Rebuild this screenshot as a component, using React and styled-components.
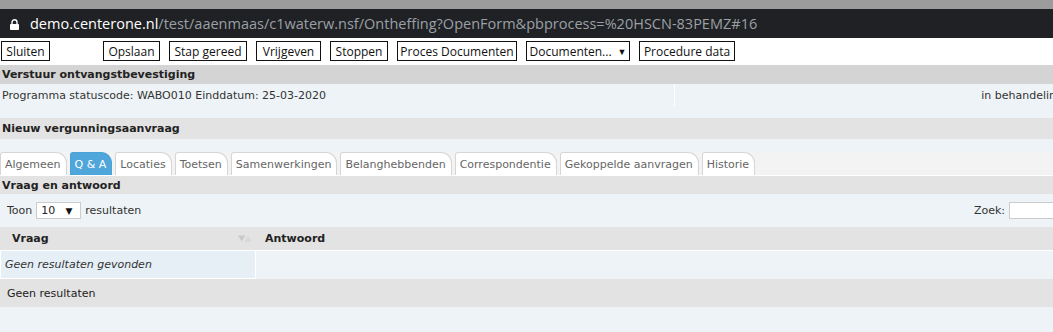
import styled, { createGlobalStyle } from "styled-components";

const GlobalStyle = createGlobalStyle`
  html, body {
    margin: 0;
    padding: 0;
    background: #fff;
    overflow: hidden;
  }
  body {
    font-family: "DejaVu Sans", Verdana, sans-serif;
    font-size: 11px;
    color: #222;
  }
`;

const buttons = [
  { label: "Opslaan", width: 57 },
  { label: "Stap gereed", width: 78 },
  { label: "Vrijgeven", width: 65 },
  { label: "Stoppen", width: 58 },
  { label: "Proces Documenten", width: 120 },
];

const tabs = [
  "Algemeen",
  "Q & A",
  "Locaties",
  "Toetsen",
  "Samenwerkingen",
  "Belanghebbenden",
  "Correspondentie",
  "Gekoppelde aanvragen",
  "Historie",
];

const App = () => {
  return (
    <>
      <GlobalStyle />
      <Page>
        <TitleStrip />
        <AddressBar>
          <LockIcon width="9" height="11" viewBox="0 0 9 11">
            <path
              d="M2 5V3.3a2.5 2.5 0 0 1 5 0V5"
              fill="none"
              stroke="#fff"
              strokeWidth="1.4"
            />
            <rect x="0" y="5" width="9" height="6" rx="0.8" fill="#fff" />
          </LockIcon>
          <Url>
            <Domain>demo.centerone.nl</Domain>
            /test/aaenmaas/c1waterw.nsf/Ontheffing?OpenForm&amp;pbprocess=%20HSCN-83PEMZ#16
          </Url>
        </AddressBar>

        <Toolbar>
          <ToolButton $width={49}>Sluiten</ToolButton>
          <ButtonGroup>
            {buttons.map((b) => (
              <ToolButton key={b.label} $width={b.width}>
                {b.label}
              </ToolButton>
            ))}
            <ToolButton $width={104}>
              Documenten... <Caret>▼</Caret>
            </ToolButton>
            <ToolButton $width={96}>Procedure data</ToolButton>
          </ButtonGroup>
        </Toolbar>

        <SectionHeader $tone="dark">Verstuur ontvangstbevestiging</SectionHeader>
        <StatusRow>
          <StatusCell>Programma statuscode: WABO010 Einddatum: 25-03-2020</StatusCell>
          <StatusCell $right>in behandeling</StatusCell>
        </StatusRow>

        <SectionHeader $tone="light" $gap>
          Nieuw vergunningsaanvraag
        </SectionHeader>

        <TabBar>
          {tabs.map((t) => (
            <Tab key={t} $active={t === "Q & A"}>
              {t}
            </Tab>
          ))}
        </TabBar>

        <PanelTitle>Vraag en antwoord</PanelTitle>
        <Controls>
          <Length>
            Toon
            <Select>
              10 <Caret>▼</Caret>
            </Select>
            resultaten
          </Length>
          <Search>
            Zoek:
            <SearchInput />
          </Search>
        </Controls>

        <Table>
          <HeadRow>
            <HeadCell $first>
              Vraag
              <SortIcon width="14" height="9" viewBox="0 0 14 9">
                <path d="M0 1.5h7.5L3.8 7.5z" fill="#c9c9c9" />
                <path d="M6 8h8L10 2z" fill="#d9d9d9" />
              </SortIcon>
            </HeadCell>
            <HeadCell>Antwoord</HeadCell>
          </HeadRow>
          <BodyRow>
            <EmptyCell>Geen resultaten gevonden</EmptyCell>
            <BodyCell />
          </BodyRow>
        </Table>
        <Info>Geen resultaten</Info>
        <Footer />
      </Page>
    </>
  );
};

const Page = styled.div`
  width: 1069px;
  height: 332px;
  overflow: hidden;
  background: #eef3f7;
`;

const TitleStrip = styled.div`
  height: 9px;
  background: #9c9c9c;
`;

const AddressBar = styled.div`
  height: 29px;
  background: #202124;
  display: flex;
  align-items: center;
  padding-left: 10px;
  gap: 11px;
`;

const LockIcon = styled.svg`
  flex: none;
  margin-top: 1px;
`;

const Url = styled.div`
  font-family: "Open Sans", "Noto Sans", sans-serif;
  font-size: 14.5px;
  color: #9aa0a6;
  white-space: nowrap;
`;

const Domain = styled.span`
  color: #fff;
`;

const Toolbar = styled.div`
  height: 27px;
  box-sizing: border-box;
  padding: 3px 0 0 1px;
  background: #fff;
  display: flex;
  gap: 53px;
`;

const ButtonGroup = styled.div`
  display: flex;
  gap: 9px;
`;

const ToolButton = styled.div`
  width: ${({ $width }) => $width}px;
  height: 20px;
  box-sizing: border-box;
  border: 1px solid #111;
  display: flex;
  align-items: center;
  justify-content: center;
  gap: 6px;
  font-family: "Open Sans", "Noto Sans", sans-serif;
  font-size: 12px;
  color: #111;
  background: #fff;
  white-space: nowrap;
`;

const Caret = styled.span`
  font-size: 9px;
  color: #111;
`;

const SectionHeader = styled.div`
  height: ${({ $tone }) => ($tone === "dark" ? "19px" : "21px")};
  margin-top: ${({ $gap }) => ($gap ? "12px" : "0")};
  box-sizing: border-box;
  padding-left: 2px;
  display: flex;
  align-items: center;
  font-weight: bold;
  color: #222;
  background: ${({ $tone }) => ($tone === "dark" ? "#d4d4d4" : "#e3e3e3")};
`;

const StatusRow = styled.div`
  display: grid;
  grid-template-columns: 674px 1fr;
  gap: 1px;
  background: #fff;
  height: 22px;
`;

const StatusCell = styled.div`
  background: #eef3f7;
  display: flex;
  align-items: center;
  justify-content: ${({ $right }) => ($right ? "flex-end" : "flex-start")};
  padding: 0 6px 0 2px;
  white-space: nowrap;
  color: #333;
`;

const TabBar = styled.div`
  margin-top: 13px;
  height: 24px;
  box-sizing: border-box;
  background: #f3f3f3;
  border-bottom: 1px solid #fff;
  display: flex;
  align-items: flex-end;
  gap: 3px;
`;

const Tab = styled.div`
  height: 23px;
  box-sizing: border-box;
  padding: 0 5px 0 4px;
  display: flex;
  align-items: center;
  border: 1px solid ${({ $active }) => ($active ? "#4aa3d8" : "#d6d6d6")};
  border-bottom: none;
  border-radius: 3px 11px 0 0;
  background: ${({ $active }) => ($active ? "#4ea6da" : "#fff")};
  color: ${({ $active }) => ($active ? "#fff" : "#666")};
  font-size: 11px;
  white-space: nowrap;
`;

const PanelTitle = styled.div`
  height: 18px;
  padding-left: 2px;
  display: flex;
  align-items: center;
  font-weight: bold;
  background: #e3e3e3;
  color: #222;
`;

const Controls = styled.div`
  height: 33px;
  display: flex;
  align-items: center;
  justify-content: space-between;
  padding-left: 7px;
  background: #eef3f7;
  color: #333;
`;

const Length = styled.div`
  display: flex;
  align-items: center;
  gap: 4px;
`;

const Select = styled.div`
  width: 45px;
  height: 17px;
  box-sizing: border-box;
  border: 1px solid #ccc;
  background: #fff;
  display: flex;
  align-items: center;
  justify-content: space-between;
  padding: 0 8px 0 4px;
  color: #222;
`;

const Search = styled.div`
  display: flex;
  align-items: center;
  gap: 4px;
`;

const SearchInput = styled.div`
  width: 60px;
  height: 17px;
  box-sizing: border-box;
  border: 1px solid #ccc;
  background: #fff;
`;

const Table = styled.div`
  display: flex;
  flex-direction: column;
`;

const HeadRow = styled.div`
  display: grid;
  grid-template-columns: 256px 1fr;
  height: 23px;
  background: #e3e3e3;
  border-bottom: 1px solid #fff;
`;

const HeadCell = styled.div`
  display: flex;
  align-items: center;
  justify-content: space-between;
  padding-left: ${({ $first }) => ($first ? "12px" : "9px")};
  padding-right: 4px;
  font-weight: bold;
  color: #222;
`;

const SortIcon = styled.svg`
  flex: none;
`;

const BodyRow = styled.div`
  display: grid;
  grid-template-columns: 256px 1fr;
  height: 28px;
`;

const EmptyCell = styled.div`
  box-sizing: border-box;
  border: 1px solid #fff;
  border-top: none;
  background: #e6eff6;
  display: flex;
  align-items: center;
  padding-left: 4px;
  font-style: italic;
  color: #333;
`;

const BodyCell = styled.div`
  background: #eef3f7;
`;

const Info = styled.div`
  height: 28px;
  display: flex;
  align-items: center;
  padding-left: 7px;
  background: #e3e3e3;
  color: #222;
`;

const Footer = styled.div`
  height: 24px;
  background: #eef3f7;
`;

export default App;
